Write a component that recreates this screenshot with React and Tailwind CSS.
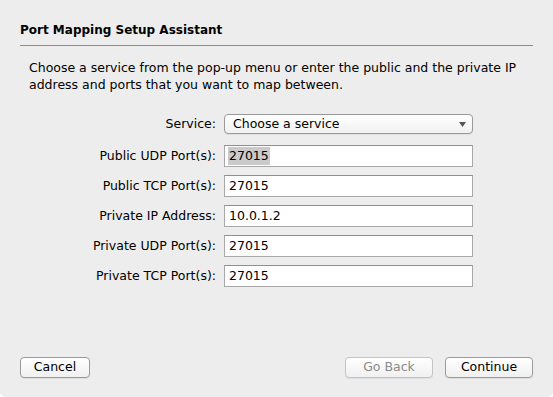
import { useState } from 'react'

const FIELDS = [
  { label: 'Public UDP Port(s):', value: '27015', selected: true },
  { label: 'Public TCP Port(s):', value: '27015' },
  { label: 'Private IP Address:', value: '10.0.1.2' },
  { label: 'Private UDP Port(s):', value: '27015' },
  { label: 'Private TCP Port(s):', value: '27015' },
]

export default function App() {
  const [service] = useState('Choose a service')

  return (
    <div
      className="w-[553px] h-[397px] bg-[#ededed] text-black rounded-b-[5px] flex flex-col text-[12.5px]"
      style={{ fontFamily: '"DejaVu Sans", "Lucida Grande", sans-serif' }}
    >
      {/* Header */}
      <div className="px-5 pt-[22px]">
        <h1 className="font-bold text-[12px] leading-[16px]">Port Mapping Setup Assistant</h1>
        <div className="h-px bg-[#8c8c8c] mt-[7px] w-[513px]" />
      </div>

      {/* Intro */}
      <p className="pl-[29px] pr-4 pt-[13px] leading-[17px]">
        Choose a service from the pop-up menu or enter the public and the private IP address and ports that you want to map between.
      </p>

      {/* Form */}
      <div className="pt-[21px] flex flex-col">
        <Row label="Service:">
          <div className="w-[249px] h-[20px] rounded-[4px] border border-[#9a9a9a] bg-gradient-to-b from-white to-[#f1f1f1] shadow-[0_1px_0_rgba(0,0,0,0.05)] flex items-center pl-[8px] pr-[6px]">
            <span className="flex-1">{service}</span>
            <svg width="7" height="5" viewBox="0 0 7 5">
              <path d="M0 0h7L3.5 5z" fill="#555" />
            </svg>
          </div>
        </Row>
        <div className="flex flex-col gap-[8px] mt-[11px]">
          {FIELDS.map(f => (
            <Row key={f.label} label={f.label}>
              <div className="w-[249px] h-[22px] border border-[#a8a8a8] border-t-[#8f8f8f] bg-white flex items-center pl-[3px]">
                <span className={f.selected ? 'bg-[#cacaca] px-[1px]' : 'px-[1px]'}>{f.value}</span>
              </div>
            </Row>
          ))}
        </div>
      </div>

      <div className="flex-1" />

      {/* Buttons */}
      <div className="flex items-center px-5 pb-[19px] text-[12.5px]">
        <Button className="w-[70px]">Cancel</Button>
        <div className="flex-1" />
        <Button className="w-[88px] text-[#8a8a8a] border-[#c4c4c4]">Go Back</Button>
        <Button className="w-[88px] ml-[12px]">Continue</Button>
      </div>
    </div>
  )
}

function Row({ label, children }) {
  return (
    <div className="flex items-center">
      <span className="w-[224px] text-right pr-[8px]">{label}</span>
      {children}
    </div>
  )
}

function Button({ className = '', children }) {
  return (
    <div
      className={`h-[21px] rounded-[4px] border border-[#9a9a9a] bg-gradient-to-b from-white to-[#f0f0f0] flex items-center justify-center shadow-[0_1px_0_rgba(0,0,0,0.06)] ${className}`}
    >
      {children}
    </div>
  )
}
